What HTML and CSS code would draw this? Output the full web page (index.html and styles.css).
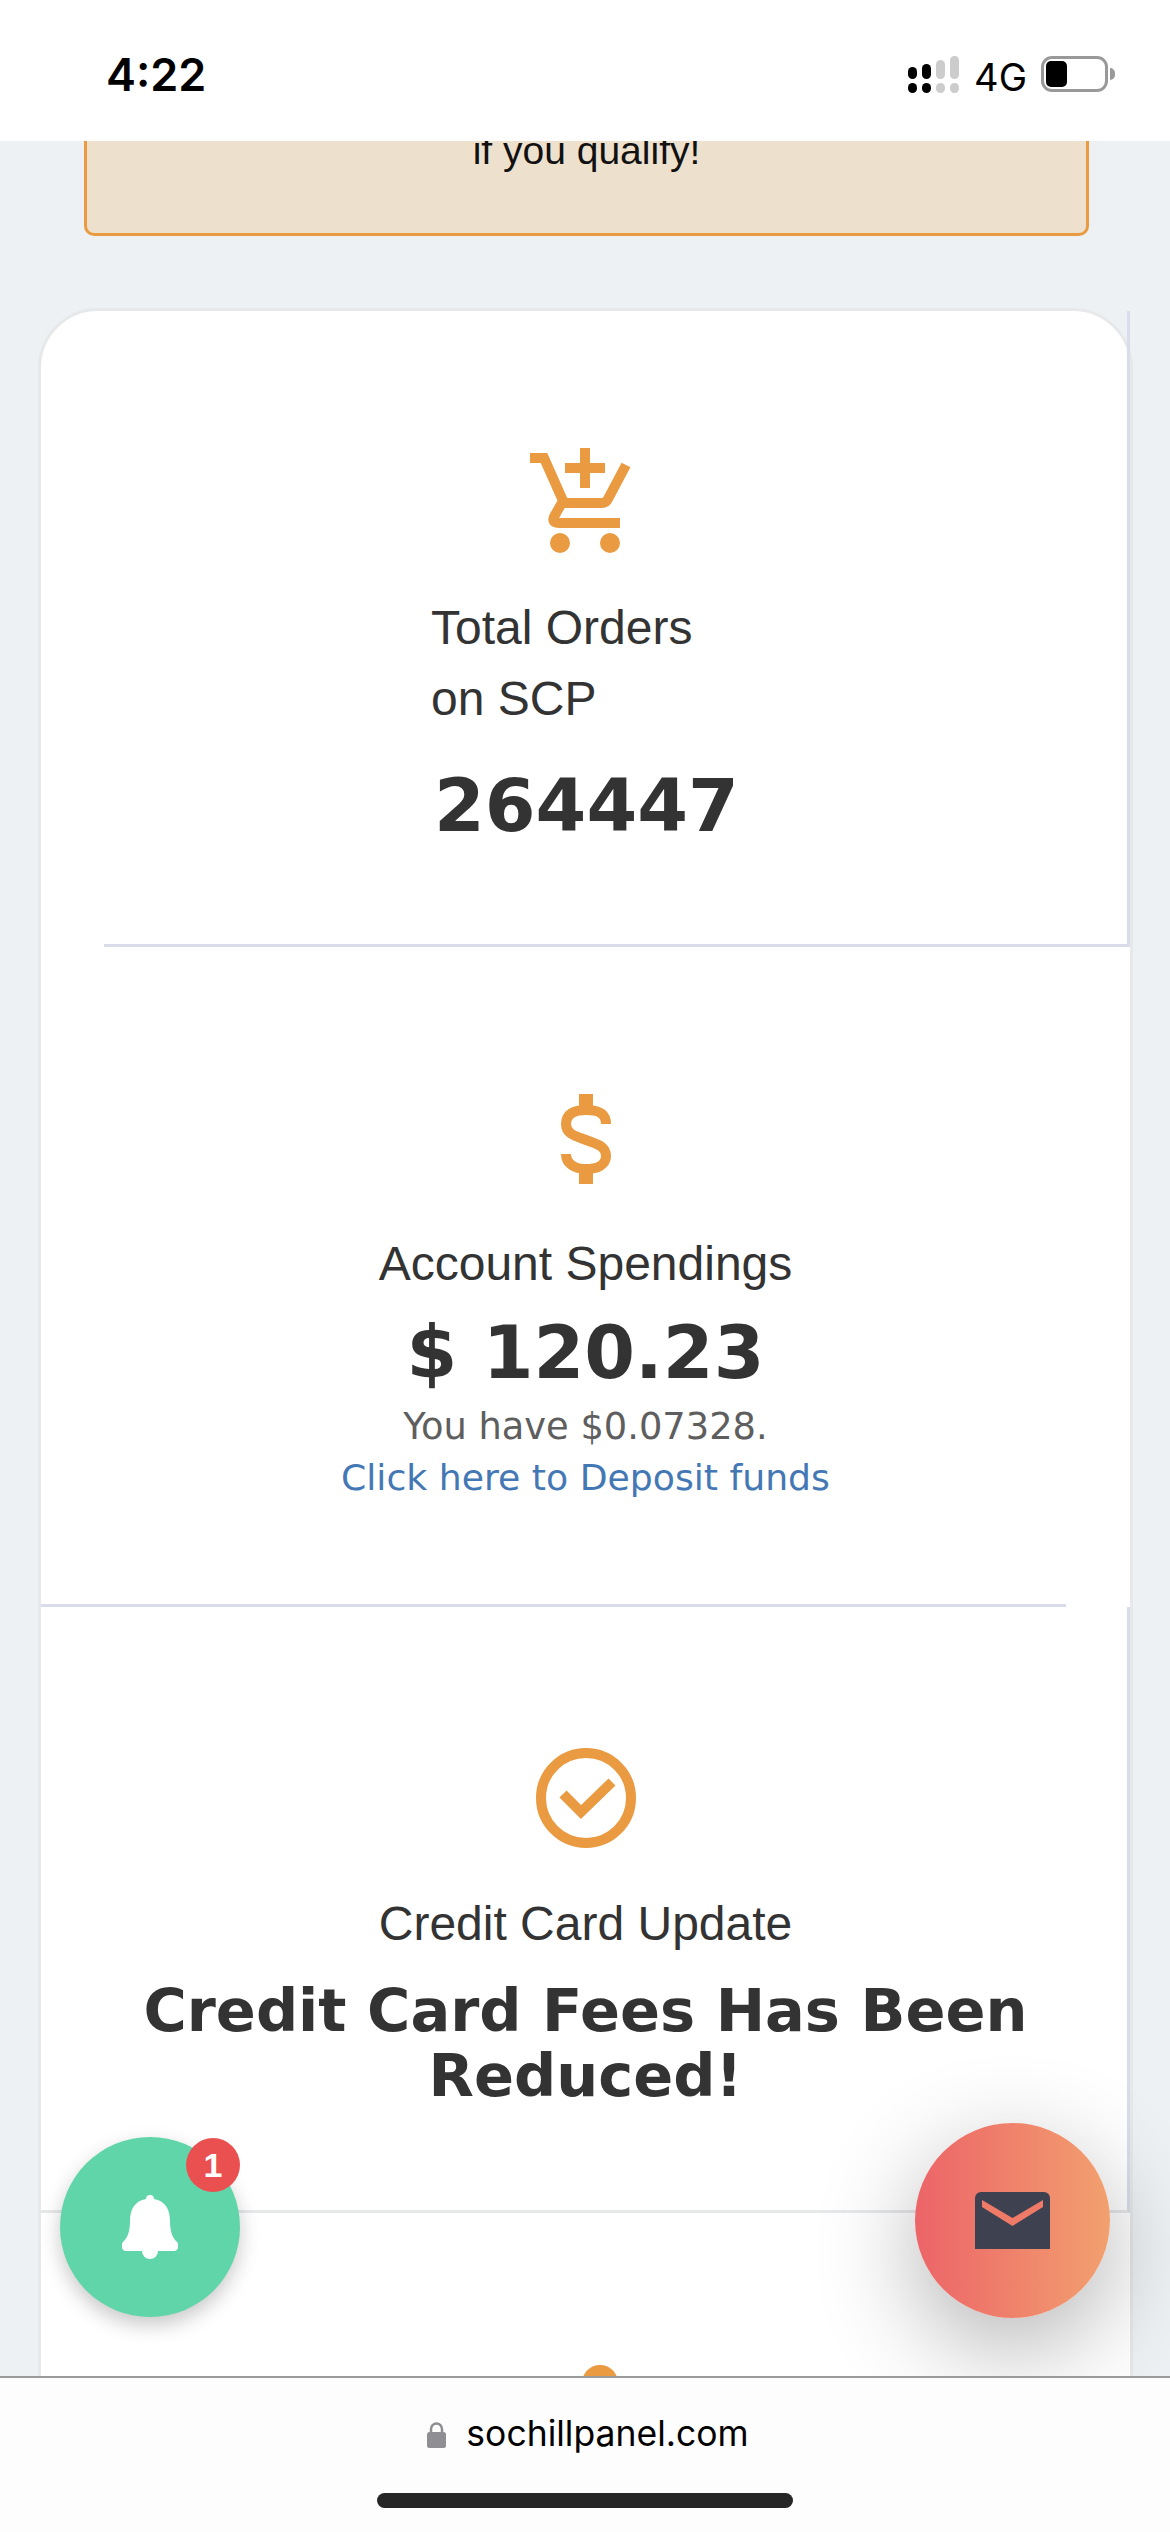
FILE: index.html
```html
<!DOCTYPE html>
<html lang="en">
<head>
    <meta charset="UTF-8">
    <title>sochillpanel.com</title>
    <link rel="stylesheet" href="styles.css">
</head>
<body>
    <div class="phone">
        <div class="status-bar">
            <span class="clock">4:22</span>
            <div class="status-icons">
                <div class="signal">
                    <div class="bar"><i class="on s1"></i><i class="on dot"></i></div>
                    <div class="bar"><i class="on s2"></i><i class="on dot"></i></div>
                    <div class="bar"><i class="s3"></i><i class="dot"></i></div>
                    <div class="bar"><i class="s4"></i><i class="dot"></i></div>
                </div>
                <span class="network">4G</span>
                <div class="battery"><div class="battery-level"></div></div>
                <div class="battery-nub"></div>
            </div>
        </div>

        <div class="content">
            <div class="notice">if you qualify!</div>

            <div class="stats-card">
                <div class="stat stat-orders">
                    <svg class="icon icon-cart" viewBox="0 0 101 105">
                        <path d="M0 10h14L34 55H72Q76 55 78 51L96 17M33 53L25 67Q20 75 30 75H90" fill="none" stroke="#ea9a40" stroke-width="10"/>
                        <path d="M35 15h40v10H35zM50 0h10v40H50z" fill="#ea9a40"/>
                        <circle cx="30" cy="95" r="10" fill="#ea9a40"/>
                        <circle cx="80" cy="95" r="10" fill="#ea9a40"/>
                    </svg>
                    <div class="orders-text">
                        <div class="stat-label">Total Orders<br>on SCP</div>
                        <div class="stat-value">264447</div>
                    </div>
                </div>

                <div class="stat stat-spend">
                    <svg class="icon icon-dollar" viewBox="0 0 50 90">
                        <path d="M18 0h14v12H18zM18 78h14v12H18z" fill="#ea9a40"/>
                        <path d="M45 30C45 18 36 16 25 16C13 16 5 20 5 30C5 40 14 42 25 46C36 50 45 52 45 62C45 71 36 75 25 75C14 75 5 70 5 60" fill="none" stroke="#ea9a40" stroke-width="10"/>
                    </svg>
                    <div class="stat-label">Account Spendings</div>
                    <div class="stat-value">$ 120.23</div>
                    <div class="stat-note">You have $0.07328.</div>
                    <a class="stat-link" href="#">Click here to Deposit funds</a>
                </div>

                <div class="stat stat-update">
                    <svg class="icon icon-check" viewBox="0 0 100 100">
                        <circle cx="50" cy="50" r="45" fill="none" stroke="#ea9a40" stroke-width="10"/>
                        <path d="M27 46l18 18 31-30" fill="none" stroke="#ea9a40" stroke-width="10"/>
                    </svg>
                    <div class="stat-label">Credit Card Update</div>
                    <div class="stat-headline">Credit Card Fees Has Been Reduced!</div>
                </div>

                <div class="stat stat-last">
                    <svg class="icon icon-user" viewBox="0 0 36 36">
                        <circle cx="18" cy="18" r="18" fill="#ea9a40"/>
                    </svg>
                </div>
            </div>

            <button class="fab fab-bell">
                <svg class="bell" viewBox="0 0 56 64">
                    <path d="M28 0a4 4 0 0 1 4 4c11 2 16 10 16 22c0 12 3 17 7 21c3 3 1 9-3 9H4c-4 0-6-6-3-9c4-4 7-9 7-21C8 14 13 6 24 4a4 4 0 0 1 4-4z" fill="#fff"/>
                    <path d="M20 56h16a8 8 0 0 1-16 0z" fill="#fff"/>
                </svg>
                <span class="badge">1</span>
            </button>

            <button class="fab fab-mail">
                <svg class="envelope" viewBox="0 0 75 57">
                    <path d="M6 0h63a6 6 0 0 1 6 6v51H0V6a6 6 0 0 1 6-6z" fill="#3e4250"/>
                    <path d="M7 8l30.500 18L68 8v7L37.500 34 7 15z" fill="#ef7a68"/>
                </svg>
            </button>
        </div>

        <div class="url-bar">
            <div class="url">
                <svg class="lock" viewBox="0 0 19 27">
                    <path d="M4 12V8a5.500 5.500 0 0 1 11 0v4" fill="none" stroke="#8e8e93" stroke-width="2.500"/>
                    <rect y="11" width="19" height="16" rx="2.500" fill="#8e8e93"/>
                </svg>
                <span>sochillpanel.com</span>
            </div>
            <div class="home-pill"></div>
        </div>
    </div>
</body>
</html>
```

FILE: styles.css
```css
* {
    box-sizing: border-box;
}

body {
    margin: 0;
    font-family: "Liberation Sans", Arial, sans-serif;
    color: #333;
}

.phone {
    width: 1170px;
    height: 2532px;
    display: flex;
    flex-direction: column;
    overflow: hidden;
    background: #edf1f4;
}

/* top bar */
.status-bar {
    height: 141px;
    flex: none;
    background: #fff;
    display: flex;
    justify-content: space-between;
    padding: 47px 55px 0 106px;
    position: relative;
    z-index: 3;
}

.clock {
    font-family: Inter, sans-serif;
    font-weight: 600;
    font-size: 45px;
    line-height: 56px;
    color: #000;
}

.status-icons {
    display: flex;
    align-items: flex-start;
    padding-top: 9px;
}

.signal {
    display: flex;
    align-items: flex-end;
    gap: 5px;
    height: 37px;
    margin-right: 15px;
}

.bar {
    display: flex;
    flex-direction: column;
    gap: 4px;
}

.bar i {
    display: block;
    width: 9px;
    border-radius: 5px;
    background: #ccc;
}

.bar i.on {
    background: #000;
}

.bar .dot { height: 10px; }
.bar .s1 { height: 12px; }
.bar .s2 { height: 15px; }
.bar .s3 { height: 19px; }
.bar .s4 { height: 23px; }

.network {
    font-family: Inter, sans-serif;
    font-size: 38px;
    line-height: 42px;
    color: #000;
    margin-right: 14px;
}

.battery {
    width: 67px;
    height: 36px;
    border: 3px solid #999;
    border-radius: 11px;
    padding: 2px;
}

.battery-level {
    width: 21px;
    height: 26px;
    background: #000;
    border-radius: 5px;
}

.battery-nub {
    width: 5px;
    height: 12px;
    margin: 12px 0 0 2px;
    background: #999;
    border-radius: 0 6px 6px 0;
}

/* scrolled page */
.content {
    flex: 1;
    position: relative;
    overflow: hidden;
    padding: 0 37px 0 38px;
}

.notice {
    width: 1005px;
    height: 155px;
    margin: -60px 0 72px 46px;
    padding-top: 43px;
    background: #ede0cd;
    border: 3px solid #ea9a40;
    border-radius: 10px;
    text-align: center;
    font-size: 39px;
    line-height: 48px;
    color: #111;
}

.stats-card {
    background: #fff;
    border: 3px solid #e7e8ea;
    border-radius: 60px 60px 0 0;
    height: 2100px;
}

.stat {
    position: relative;
    text-align: center;
}

.icon {
    display: block;
    margin: 0 auto;
}

.stat-label {
    font-size: 48px;
    line-height: 71px;
}

.stat-value {
    font-family: "DejaVu Sans", sans-serif;
    font-weight: 700;
    font-size: 73px;
    line-height: 90px;
}

.stat-orders {
    height: 636px;
    padding-top: 137px;
    border-right: 3px solid #d8dde9;
}

/* bottom rule stops short of the left side on the first block */
.stat-orders::after {
    content: "";
    position: absolute;
    left: 63px;
    right: -3px;
    bottom: 0;
    height: 3px;
    background: #d8dde9;
}

.icon-cart {
    width: 101px;
    height: 105px;
    margin-left: 489px;
}

.orders-text {
    text-align: left;
    margin: 39px 0 0 390px;
}

.orders-text .stat-value {
    margin: 27px 0 0 3px;
}

.stat-spend {
    height: 660px;
    padding-top: 147px;
}

.stat-spend::after {
    content: "";
    position: absolute;
    left: 0;
    width: 1025px;
    bottom: 0;
    height: 3px;
    background: #d8dde9;
}

.icon-dollar {
    width: 50px;
    height: 90px;
}

.stat-spend .stat-label {
    margin-top: 44px;
}

.stat-spend .stat-value {
    margin: 9px 0 3px;
}

.stat-note,
.stat-link {
    display: block;
    font-family: "DejaVu Sans", sans-serif;
    line-height: 51px;
}

.stat-note {
    font-size: 36.800px;
    color: #5e5e5e;
}

.stat-link {
    font-size: 36.200px;
    color: #4478b4;
    text-decoration: none;
}

.stat-update {
    height: 606px;
    padding: 141px 0 0 3px;
    border-right: 3px solid #d8dde9;
    border-bottom: 3px solid #e7e8ea;
}

.icon-check {
    width: 100px;
    height: 100px;
}

.stat-update .stat-label {
    margin-top: 40px;
}

.stat-headline {
    font-family: "DejaVu Sans", sans-serif;
    font-weight: 700;
    font-size: 59px;
    line-height: 65px;
    width: 1000px;
    margin: 19px auto 0;
}

.stat-last {
    padding-top: 152px;
}

.icon-user {
    width: 36px;
    height: 36px;
    margin-left: 541px;
}

/* floating buttons */
.fab {
    position: absolute;
    border: 0;
    padding: 0;
    border-radius: 50%;
    display: flex;
    align-items: center;
    justify-content: center;
}

.fab-bell {
    left: 60px;
    top: 1996px;
    width: 180px;
    height: 180px;
    background: #61d5aa;
    box-shadow: 0 8px 20px rgba(0, 0, 0, 0.22);
}

.bell {
    width: 56px;
    height: 64px;
}

.badge {
    position: absolute;
    top: 1px;
    right: 0;
    width: 54px;
    height: 54px;
    border-radius: 50%;
    background: #eb5050;
    color: #fff;
    font-weight: 700;
    font-size: 34px;
    line-height: 54px;
    text-align: center;
}

.fab-mail {
    left: 915px;
    top: 1982px;
    width: 195px;
    height: 195px;
    background: linear-gradient(90deg, #ec6468, #f2a06f);
    box-shadow: 0 30px 100px rgba(0, 0, 0, 0.3);
}

.envelope {
    width: 75px;
    height: 57px;
}

/* browser address bar */
.url-bar {
    height: 156px;
    flex: none;
    position: relative;
    z-index: 3;
    background: #fdfdfd;
    border-top: 2px solid #9a9a9a;
    padding-top: 34px;
}

.url {
    display: flex;
    justify-content: center;
    align-items: center;
    gap: 20px;
    font-family: Inter, sans-serif;
    font-size: 35.500px;
    line-height: 44px;
    color: #000;
    padding-left: 6px;
}

.lock {
    width: 19px;
    height: 27px;
}

.home-pill {
    width: 416px;
    height: 15px;
    margin: 37px 0 0 377px;
    background: #262626;
    border-radius: 8px;
}
```
